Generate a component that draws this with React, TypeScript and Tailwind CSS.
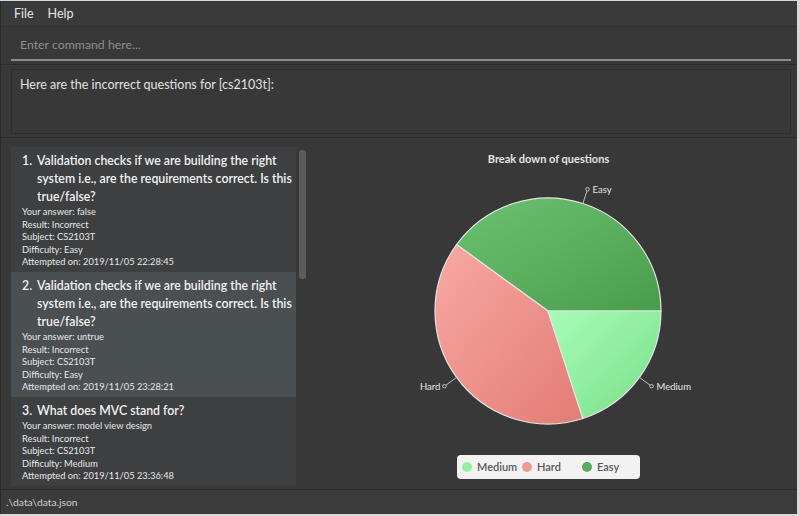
import React from "react";

const CX = 242;
const CY = 145;
const R = 113;

function pt(angleDeg: number, r: number) {
  const a = (angleDeg * Math.PI) / 180;
  return { x: CX + r * Math.cos(a), y: CY - r * Math.sin(a) };
}

function slicePath(a0: number, a1: number) {
  const p0 = pt(a0, R);
  const p1 = pt(a1, R);
  const large = a1 - a0 > 180 ? 1 : 0;
  return `M${CX},${CY} L${p0.x.toFixed(2)},${p0.y.toFixed(2)} A${R},${R} 0 ${large} 0 ${p1.x.toFixed(2)},${p1.y.toFixed(2)} Z`;
}

function Leader({ mid, label, anchor }: { mid: number; label: string; anchor: "start" | "end" }) {
  const e = pt(mid, R);
  const l = pt(mid, R + 13);
  const c = pt(mid, R + 15);
  const tx = anchor === "start" ? c.x + 5 : c.x - 4;
  return (
    <g>
      <line x1={e.x} y1={e.y} x2={l.x} y2={l.y} stroke="#bdbdbd" strokeWidth={1} />
      <circle cx={c.x} cy={c.y} r={1.8} fill="none" stroke="#cfcfcf" strokeWidth={0.9} />
      <text
        x={tx}
        y={c.y + 3.5}
        textAnchor={anchor}
        fontSize="9.5"
        fill="#e6e6e6"
        fontFamily="Lato, 'Open Sans', sans-serif"
      >
        {label}
      </text>
    </g>
  );
}

function PieChart() {
  return (
    <svg width={485} height={280} viewBox="0 0 485 280" className="block">
      <defs>
        <linearGradient id="gEasy" x1="0" y1="0" x2="1" y2="1">
          <stop offset="0%" stopColor="#6cc270" />
          <stop offset="100%" stopColor="#4a9c4d" />
        </linearGradient>
        <linearGradient id="gHard" x1="0" y1="0" x2="1" y2="1">
          <stop offset="0%" stopColor="#f9a8a3" />
          <stop offset="100%" stopColor="#e27c76" />
        </linearGradient>
        <linearGradient id="gMed" x1="0" y1="0" x2="1" y2="1">
          <stop offset="0%" stopColor="#a6fdb6" />
          <stop offset="100%" stopColor="#78df89" />
        </linearGradient>
      </defs>
      <path d={slicePath(0, 144)} fill="url(#gEasy)" stroke="#e4e4e4" strokeWidth={1.2} />
      <path d={slicePath(144, 288)} fill="url(#gHard)" stroke="#e4e4e4" strokeWidth={1.2} />
      <path d={slicePath(288, 360)} fill="url(#gMed)" stroke="#e4e4e4" strokeWidth={1.2} />
      <Leader mid={72} label="Easy" anchor="start" />
      <Leader mid={216} label="Hard" anchor="end" />
      <Leader mid={324} label="Medium" anchor="start" />
    </svg>
  );
}

type Q = {
  n: number;
  title: string[];
  answer: string;
  subject: string;
  difficulty: string;
  time: string;
  selected?: boolean;
};

const questions: Q[] = [
  {
    n: 1,
    title: [
      "Validation checks if we are building the right",
      "system i.e., are the requirements correct. Is this",
      "true/false?",
    ],
    answer: "false",
    subject: "CS2103T",
    difficulty: "Easy",
    time: "2019/11/05 22:28:45",
  },
  {
    n: 2,
    title: [
      "Validation checks if we are building the right",
      "system i.e., are the requirements correct. Is this",
      "true/false?",
    ],
    answer: "untrue",
    subject: "CS2103T",
    difficulty: "Easy",
    time: "2019/11/05 23:28:21",
    selected: true,
  },
  {
    n: 3,
    title: ["What does MVC stand for?"],
    answer: "model view design",
    subject: "CS2103T",
    difficulty: "Medium",
    time: "2019/11/05 23:36:48",
  },
];

function QuestionCard({ q }: { q: Q }) {
  return (
    <div className={`${q.selected ? "bg-[#4a4f52]" : "bg-[#3d3f41]"} pt-[5px] pb-[3px] pl-[11px]`}>
      <div className="flex text-[12.3px] leading-[18px] font-semibold text-[#f2f2f2]">
        <span className="w-[15px] shrink-0">{q.n}.</span>
        <div className="flex flex-col">
          {q.title.map((t, i) => (
            <span key={i} className="whitespace-nowrap">
              {t}
            </span>
          ))}
        </div>
      </div>
      <div className="text-[9.3px] leading-[12.6px] text-[#e8e8e8]">
        <div>Your answer: {q.answer}</div>
        <div>Result: Incorrect</div>
        <div>Subject: {q.subject}</div>
        <div>Difficulty: {q.difficulty}</div>
        <div>Attempted on: {q.time}</div>
      </div>
    </div>
  );
}

export default function App() {
  return (
    <div
      className="w-[800px] h-[516px] bg-[#d8d8d8] pt-px pr-[3px] pb-[2px] overflow-hidden"
      style={{ fontFamily: "Lato, 'Open Sans', sans-serif" }}
    >
      <div className="h-full flex flex-col bg-[#383838] border-l border-[#2a2a2a]">
        {/* Menu bar */}
        <div className="h-[26px] shrink-0 flex items-center gap-[14px] px-[13px] pt-[2px] text-[12.5px] text-[#e6e6e6] bg-[#3a3a3a] border-b border-[#303030]">
          <span>File</span>
          <span>Help</span>
        </div>

        {/* Command box */}
        <div className="h-[37px] shrink-0 pl-[10px] pr-[6px] pb-[3px] flex flex-col justify-end">
          <div className="h-[32px] border-b-2 border-[#8c8c8c] flex items-center pl-[9px] pt-[3px] text-[12.3px] text-[#8e8e8e]">
            Enter command here...
          </div>
        </div>

        {/* Result display */}
        <div className="h-[74px] shrink-0 border-t border-b border-[#2c2c2c] pt-[4px] pb-[3px] pl-[10px] pr-[6px]">
          <div className="h-[65px] border border-[#2e2e2e] bg-[#383838] pl-[8px] pt-[6px] text-[12.5px] leading-[18px] text-[#e2e2e2]">
            Here are the incorrect questions for [cs2103t]:
          </div>
        </div>

        {/* Main */}
        <div className="flex-1 flex min-h-0">
          <div className="w-[305px] shrink-0 flex pl-[10px] pt-[9px] overflow-hidden">
            <div className="w-[285px] shrink-0 flex flex-col overflow-hidden">
              {questions.map((q) => (
                <QuestionCard key={q.n} q={q} />
              ))}
            </div>
            <div className="ml-[3px] mt-[3px] w-[7px] h-[129px] rounded-[3px] bg-[#5c5c5c]" />
          </div>
          <div className="flex-1 pr-[6px] flex flex-col items-center">
            <div className="pt-[14px] text-[11px] leading-[14px] font-bold text-[#e4e4e4]">
              Break down of questions
            </div>
            <PieChart />
            <div className="mt-[9px] w-[183px] h-[24px] bg-[#f2f2f2] rounded-[4px] grid grid-cols-[60px_60px_60px] pl-[5px] items-center text-[11px] font-semibold text-[#585858]">
              <div className="flex items-center gap-[5px]">
                <span className="w-[10px] h-[10px] rounded-full bg-[#94eea6]" />
                <span>Medium</span>
              </div>
              <div className="flex items-center gap-[5px]">
                <span className="w-[10px] h-[10px] rounded-full bg-[#ef9a95]" />
                <span>Hard</span>
              </div>
              <div className="flex items-center gap-[5px]">
                <span className="w-[10px] h-[10px] rounded-full bg-[#5aab5d]" />
                <span>Easy</span>
              </div>
            </div>
          </div>
        </div>

        {/* Status bar */}
        <div className="h-[25px] shrink-0 border-t border-[#2c2c2c] bg-[#3b3b3b] flex items-center pl-[5px] pt-[2px] text-[10.3px] text-[#d0d0d0]">
          .\data\data.json
        </div>
      </div>
    </div>
  );
}
